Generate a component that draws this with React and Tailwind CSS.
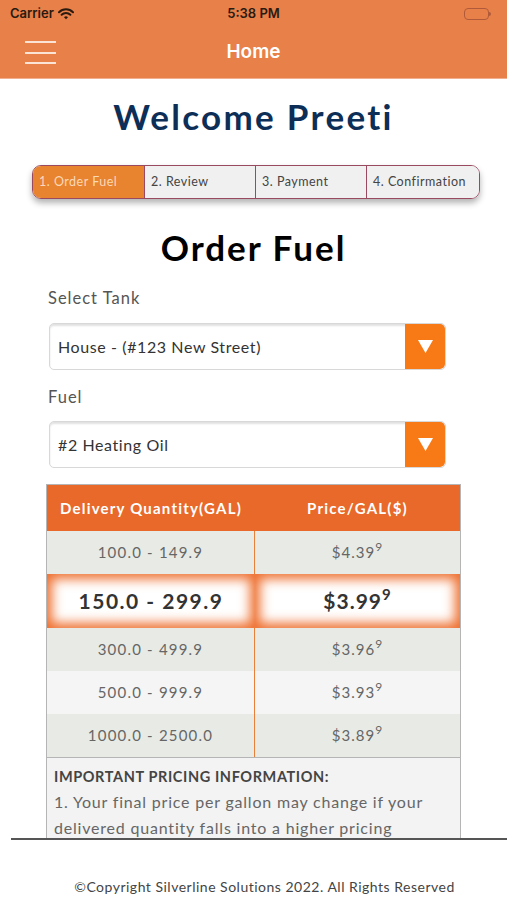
import React from "react";

const rows = [
  { q: "100.0 - 149.9", p: "$4.39", bg: "bg-[#E8EBE5]" },
  { q: "150.0 - 299.9", p: "$3.99", hl: true },
  { q: "300.0 - 499.9", p: "$3.96", bg: "bg-[#E8EBE5]" },
  { q: "500.0 - 999.9", p: "$3.93", bg: "bg-[#F5F5F5]" },
  { q: "1000.0 - 2500.0", p: "$3.89", bg: "bg-[#E8EBE5]" },
];

function Select({ text }) {
  return (
    <div className="ml-[49px] w-[397px] h-[47px] flex rounded-[5px] border border-[#d8d8d8] bg-white shadow-[inset_0_2px_2px_rgba(0,0,0,0.12)] overflow-hidden">
      <div className="flex-1 flex items-center pl-[8px] text-[16px] tracking-[0.6px] text-[#333]">{text}</div>
      <div className="w-[40px] bg-[#F77A17] flex items-center justify-center rounded-r-[5px]">
        <svg width="15" height="13" viewBox="0 0 15 13">
          <polygon points="0,0 15,0 7.5,13" fill="white" />
        </svg>
      </div>
    </div>
  );
}

export default function App() {
  return (
    <div className="w-[507px] h-[900px] bg-white flex flex-col overflow-hidden" style={{ fontFamily: "Lato, 'Open Sans', sans-serif" }}>
      {/* status bar */}
      <div className="h-[27px] shrink-0 bg-[#E8804A] flex items-center px-[10px] relative" style={{ fontFamily: "Inter, 'Liberation Sans', sans-serif" }}>
        <div className="flex items-center gap-[4px] text-[13px] font-semibold text-[#2a1a10]">
          <span>Carrier</span>
          <svg width="16" height="12" viewBox="0 0 16 12">
            <path d="M1 4.2 A10 10 0 0 1 15 4.2" stroke="#2a1a10" strokeWidth="2" fill="none" strokeLinecap="round" />
            <path d="M3.6 6.8 A6.3 6.3 0 0 1 12.4 6.8" stroke="#2a1a10" strokeWidth="2" fill="none" strokeLinecap="round" />
            <path d="M6 9.3 A2.8 2.8 0 0 1 10 9.3 L8 11.3 Z" fill="#2a1a10" />
          </svg>
        </div>
        <div className="absolute left-0 right-0 text-center text-[13px] font-semibold text-[#2a1a10] pointer-events-none">5:38 PM</div>
        <div className="ml-auto mr-[6px] flex items-center">
          <div className="w-[25px] h-[12px] rounded-[4px] border border-[#b05a3a]" />
          <div className="w-[2px] h-[4px] bg-[#b05a3a] rounded-r-sm" />
        </div>
      </div>
      {/* nav */}
      <div className="h-[52px] shrink-0 bg-[#E8804A] flex items-center relative border-b border-[#f0b090]">
        <div className="ml-[25px] w-[31px] flex flex-col gap-[8.5px]">
          <div className="h-[2px] bg-[#fbe3d6]" />
          <div className="h-[2px] bg-[#fbe3d6]" />
          <div className="h-[2px] bg-[#fbe3d6]" />
        </div>
        <div className="absolute left-0 right-0 text-center text-white text-[19px] font-semibold" style={{ fontFamily: "Inter, 'Liberation Sans', sans-serif" }}>Home</div>
      </div>

      {/* scroll content */}
      <div className="h-[759px] shrink-0 overflow-hidden">
        <div className="mt-[17px] text-center text-[35px] font-bold text-[#0D2F57] leading-[40px] tracking-[2.3px]">Welcome Preeti</div>

        <div className="mt-[29px] ml-[32px] w-[448px] h-[34px] flex rounded-[9px] border-[1.5px] border-[#9A4A60] overflow-hidden shadow-[0_4px_6px_rgba(0,0,0,0.3)] text-[12.5px] tracking-[0.5px]">
          <div className="w-[111px] bg-[#E8832F] text-[#fbd8b8] flex items-center pl-[6px]">1. Order Fuel</div>
          <div className="w-[111px] bg-[#F0F0F0] text-[#444] flex items-center pl-[6px] border-l-[1.5px] border-[#9A4A60]">2. Review</div>
          <div className="w-[111px] bg-[#F0F0F0] text-[#444] flex items-center pl-[6px] border-l-[1.5px] border-[#9A4A60]">3. Payment</div>
          <div className="flex-1 bg-[#F0F0F0] text-[#444] flex items-center pl-[6px] border-l-[1.5px] border-[#9A4A60]">4. Confirmation</div>
        </div>

        <div className="mt-[26px] text-center text-[35px] font-bold text-black leading-[44px] tracking-[2px]">Order Fuel</div>

        <div className="mt-[19px] ml-[48px] text-[16.5px] tracking-[1px] text-[#555] leading-[20px]">Select Tank</div>
        <div className="mt-[15px]"><Select text="House - (#123 New Street)" /></div>
        <div className="mt-[17px] ml-[48px] text-[16.5px] tracking-[1px] text-[#555] leading-[20px]">Fuel</div>
        <div className="mt-[14px]"><Select text="#2 Heating Oil" /></div>

        <div className="mt-[16px] ml-[46px] w-[415px] border border-[#b5b5b5]">
          <div className="h-[46px] bg-[#E8692A] flex text-white font-bold text-[15px] tracking-[1.2px]">
            <div className="w-[208px] flex items-center justify-center">Delivery Quantity(GAL)</div>
            <div className="flex-1 flex items-center justify-center">Price/GAL($)</div>
          </div>
          {rows.map((r) =>
            r.hl ? (
              <div key={r.q} className="h-[54px] flex bg-[#EE7030]">
                <div className="w-[208px] bg-white shadow-[inset_0_0_12px_5px_#EE7030] flex items-center justify-center text-[21px] font-bold text-[#333] tracking-[1.5px]">{r.q}</div>
                <div className="flex-1 bg-white shadow-[inset_0_0_12px_5px_#EE7030] flex items-center justify-center text-[21px] font-bold text-[#333] tracking-[1px]">
                  {r.p}<sup className="text-[15px] -top-[0.5em]">9</sup>
                </div>
              </div>
            ) : (
              <div key={r.q} className={`h-[43px] flex ${r.bg}`}>
                <div className="w-[208px] flex items-center justify-center text-[15px] tracking-[1.2px] text-[#666] border-r-[1.5px] border-[#E8803A]">{r.q}</div>
                <div className="flex-1 flex items-center justify-center text-[15px] tracking-[1px] text-[#666]">
                  {r.p}<sup className="text-[12px] -top-[0.5em]">9</sup>
                </div>
              </div>
            )
          )}
          <div className="border-t border-[#b5b5b5] bg-[#F3F3F3] px-[7px] pt-[9px] pb-[10px]">
            <div className="text-[14.5px] font-bold text-[#444] leading-[20px] tracking-[0.6px]">IMPORTANT PRICING INFORMATION:</div>
            <div className="text-[16px] text-[#666] leading-[26px] mt-[2px] tracking-[0.8px]">
              1. Your final price per gallon may change if your delivered quantity falls into a higher pricing category than the quantity you ordered.
            </div>
          </div>
        </div>
      </div>

      <div className="ml-[11px] h-[2px] shrink-0 bg-[#555]" />
      <div className="flex-1 flex items-start justify-center pt-[36px] pl-[22px] text-[14px] tracking-[0.5px] text-[#444]">
        ©Copyright Silverline Solutions 2022. All Rights Reserved
      </div>
    </div>
  );
}
